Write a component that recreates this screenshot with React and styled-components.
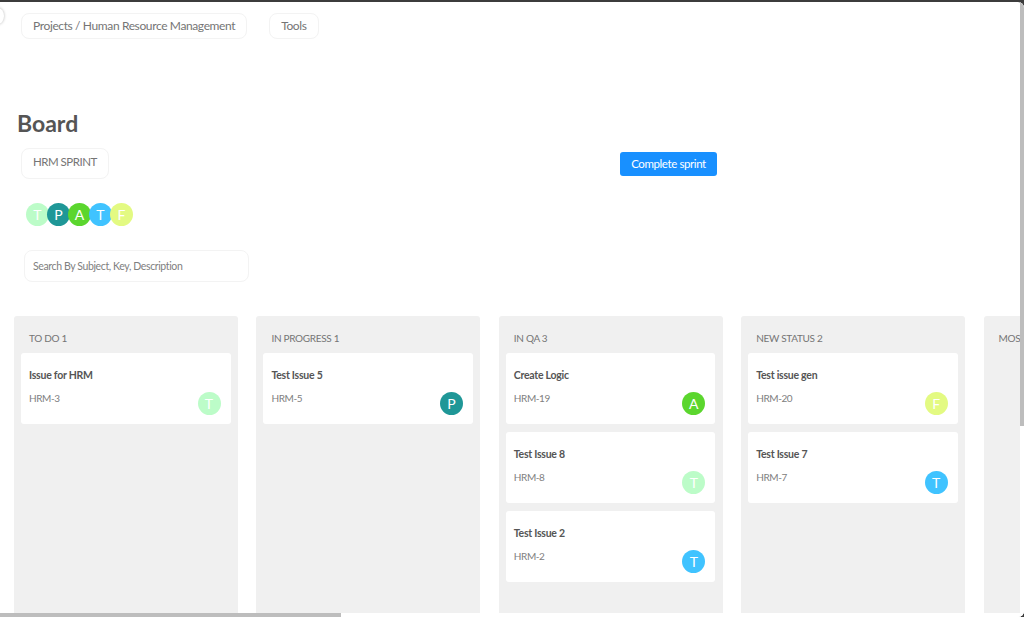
import React from 'react'
import styled, { createGlobalStyle } from 'styled-components'

const GlobalStyle = createGlobalStyle`
    html, body, #root {
        margin: 0;
        height: 100%;
        overflow: hidden;
    }
    body {
        background: #3c3c3c;
        font-family: "Lato", "Open Sans", sans-serif;
    }
`

const Frame = styled.div`
    position: relative;
    height: 615px;
    margin-top: 2px;
    background: #fff;
    border-radius: 0 6px 6px 0;
    overflow: hidden;
`

const Page = styled.div`
    height: 100%;
    overflow: hidden;
    padding-top: 11px;
    box-sizing: border-box;
`

const VerticalThumb = styled.div`
    position: absolute;
    top: 0;
    right: 0;
    width: 4px;
    height: 424px;
    background: #bdbdbd;
`

const ScrollTrackRight = styled.div`
    position: absolute;
    top: 0;
    right: 0;
    bottom: 0;
    width: 4px;
    background: #fff;
`

const HorizontalThumb = styled.div`
    position: absolute;
    left: 0;
    bottom: 0;
    width: 341px;
    height: 4px;
    background: #bdbdbd;
`

const ScrollTrackBottom = styled.div`
    position: absolute;
    left: 0;
    right: 0;
    bottom: 0;
    height: 4px;
    background: #fff;
`

const CollapseDot = styled.div`
    position: absolute;
    top: 6px;
    left: -8px;
    width: 12px;
    height: 16px;
    border-radius: 50%;
    background: #fff;
    box-shadow: 0 0 3px rgba(0, 0, 0, 0.3);
`

const TopBar = styled.div`
    display: flex;
    gap: 22px;
    padding-left: 21px;
`

const Pill = styled.div`
    box-sizing: border-box;
    display: flex;
    align-items: center;
    height: ${(p) => p.$height || 26}px;
    padding: 0 11px ${(p) => p.$lift || 1}px;
    border: 1px solid #f3f3f3;
    border-radius: 8px;
    font-size: ${(p) => p.$size || 12}px;
    letter-spacing: ${(p) => p.$spacing || -0.38}px;
    color: #757575;
    white-space: nowrap;
`

const Title = styled.h1`
    margin: 61px 0 0 17px;
    height: 37px;
    line-height: 46px;
    font-size: 23px;
    font-weight: 700;
    color: #555;
`

const SprintRow = styled.div`
    display: flex;
    align-items: center;
    width: 717px;
    justify-content: space-between;
    padding-left: 21px;
    box-sizing: border-box;
    margin-top: 11px;
`

const CompleteButton = styled.button`
    width: 97px;
    height: 24px;
    padding: 0 0 1px;
    border: 0;
    border-radius: 3px;
    background: #1890ff;
    color: #fff;
    font-family: inherit;
    font-size: 11.5px;
    letter-spacing: -0.4px;
`

const AvatarRow = styled.div`
    display: flex;
    margin: 24px 0 0 26px;

    & > * + * {
        margin-left: -2px;
    }
`

const Avatar = styled.div`
    flex: none;
    width: 23px;
    height: 23px;
    border-radius: 50%;
    background: ${(p) => p.$color};
    color: #fff;
    display: flex;
    align-items: center;
    justify-content: center;
    font-size: 14px;
    line-height: 1;
`

const SearchBox = styled.input`
    display: block;
    box-sizing: border-box;
    width: 225px;
    height: 32px;
    margin: 24px 0 0 24px;
    padding: 0 8px;
    border: 1px solid #f3f3f3;
    border-radius: 8px;
    outline: none;
    font-family: inherit;
    font-size: 10.5px;
    letter-spacing: -0.38px;

    &::placeholder {
        color: #808080;
        opacity: 1;
    }
`

const Columns = styled.div`
    display: flex;
    gap: 18.4px;
    margin: 34px 0 0 14px;
`

const Column = styled.section`
    flex: none;
    box-sizing: border-box;
    width: 224px;
    height: 572px;
    padding: 0 7.5px 0 7px;
    background: #f0f0f0;
    border-radius: 3px;
`

const ColumnTitle = styled.div`
    height: 37px;
    padding: 15px 0 0 8px;
    box-sizing: border-box;
    font-size: 10px;
    letter-spacing: -0.3px;
    line-height: 14px;
    color: #757575;
    white-space: nowrap;
`

const CardList = styled.div`
    display: flex;
    flex-direction: column;
    gap: 8px;
`

const Card = styled.article`
    box-sizing: border-box;
    height: 71px;
    padding: 15px 8px 0;
    display: grid;
    grid-template-columns: 1fr 23px;
    grid-template-rows: 16px 1fr;
    background: #fff;
    border-radius: 3px;
`

const CardTitle = styled.div`
    grid-column: 1 / 3;
    font-size: 10.5px;
    font-weight: 700;
    letter-spacing: -0.25px;
    line-height: 15px;
    color: #555;
`

const CardKey = styled.div`
    margin-top: 6px;
    font-size: 10px;
    letter-spacing: -0.4px;
    line-height: 16px;
    color: #808080;
`

const CardAvatar = styled(Avatar)`
    margin: 8px 2px 0 -2px;
`

const people = { T: '#bcfcc8', P: '#1f9797', A: '#5bd62e', B: '#40c3ff', F: '#e3fa82' }

const members = [
    ['T', people.T],
    ['P', people.P],
    ['A', people.A],
    ['T', people.B],
    ['F', people.F],
]

const columns = [
    { name: 'TO DO 1', cards: [{ title: 'Issue for HRM', key: 'HRM-3', who: 'T', color: people.T }] },
    { name: 'IN PROGRESS 1', cards: [{ title: 'Test Issue 5', key: 'HRM-5', who: 'P', color: people.P }] },
    {
        name: 'IN QA 3',
        cards: [
            { title: 'Create Logic', key: 'HRM-19', who: 'A', color: people.A },
            { title: 'Test Issue 8', key: 'HRM-8', who: 'T', color: people.T },
            { title: 'Test Issue 2', key: 'HRM-2', who: 'T', color: people.B },
        ],
    },
    {
        name: 'NEW STATUS 2',
        cards: [
            { title: 'Test issue gen', key: 'HRM-20', who: 'F', color: people.F },
            { title: 'Test Issue 7', key: 'HRM-7', who: 'T', color: people.B },
        ],
    },
    { name: 'MOS', cards: [] },
]

const App = () => (
    <>
        <GlobalStyle />
        <Frame>
            <Page>
                <TopBar>
                    <Pill>Projects / Human Resource Management</Pill>
                    <Pill>Tools</Pill>
                </TopBar>
                <Title>Board</Title>
                <SprintRow>
                    <Pill $height={31} $size={11.5} $spacing={-0.5} $lift={4}>HRM SPRINT</Pill>
                    <CompleteButton>Complete sprint</CompleteButton>
                </SprintRow>
                <AvatarRow>
                    {members.map(([letter, color], i) => (
                        <Avatar key={i} $color={color}>{letter}</Avatar>
                    ))}
                </AvatarRow>
                <SearchBox placeholder="Search By Subject, Key, Description" />
                <Columns>
                    {columns.map((col) => (
                        <Column key={col.name}>
                            <ColumnTitle>{col.name}</ColumnTitle>
                            <CardList>
                                {col.cards.map((card) => (
                                    <Card key={card.key}>
                                        <CardTitle>{card.title}</CardTitle>
                                        <CardKey>{card.key}</CardKey>
                                        <CardAvatar $color={card.color}>{card.who}</CardAvatar>
                                    </Card>
                                ))}
                            </CardList>
                        </Column>
                    ))}
                </Columns>
            </Page>
            <ScrollTrackRight />
            <ScrollTrackBottom />
            <VerticalThumb />
            <HorizontalThumb />
            <CollapseDot />
        </Frame>
    </>
)

export default App
